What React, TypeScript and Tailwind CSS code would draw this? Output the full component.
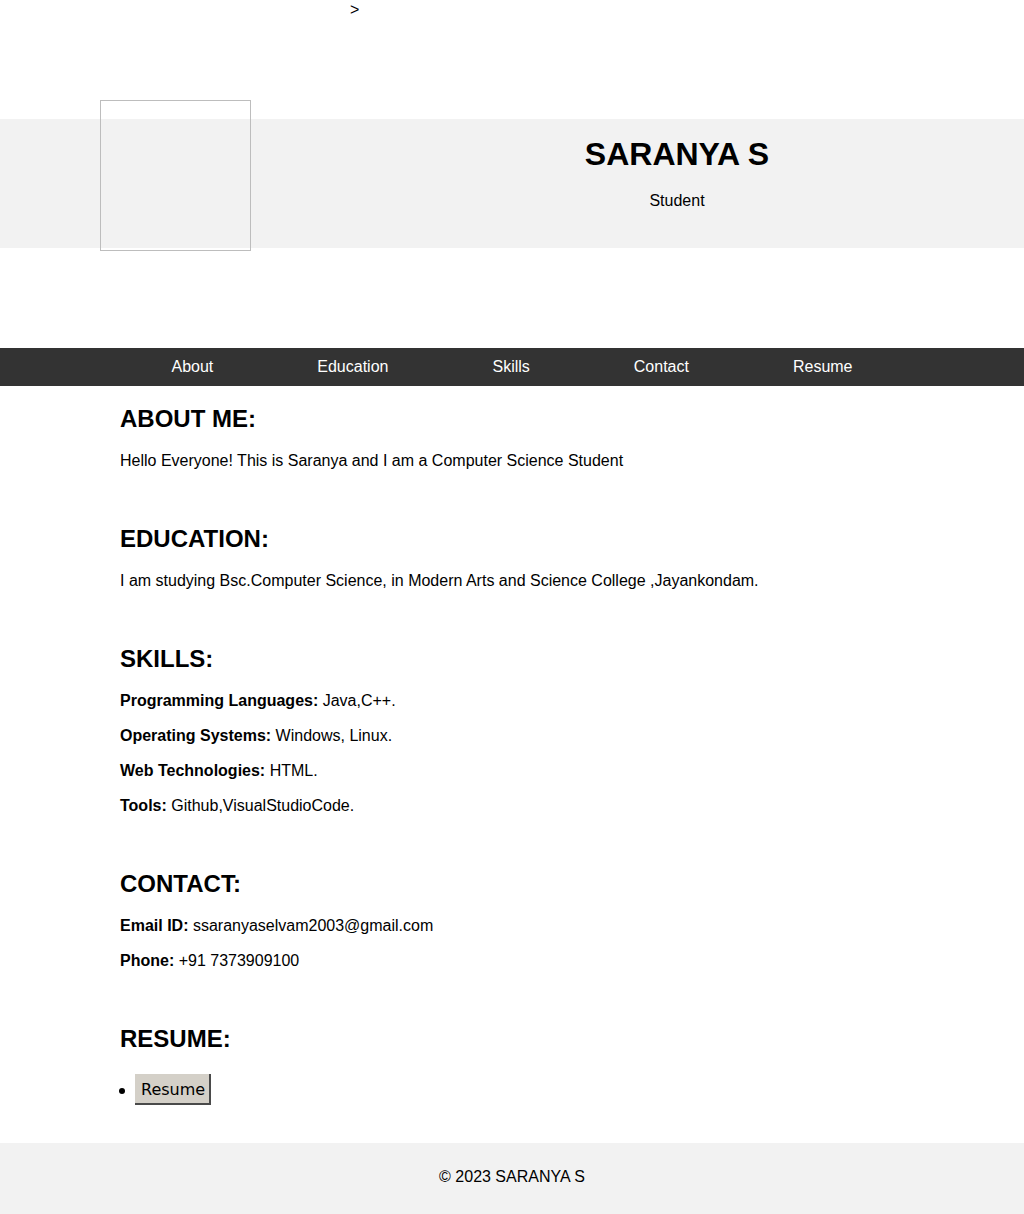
import React from "react";

const skills: [string, string][] = [
  ["Programming Languages:", "Java,C++."],
  ["Operating Systems:", "Windows, Linux."],
  ["Web Technologies:", "HTML."],
  ["Tools:", "Github,VisualStudioCode."],
];

export default function App() {
  return (
    <div className="min-h-[1214px] bg-white text-[16px] text-black font-['Liberation_Sans',Arial,sans-serif]">
      <div className="h-[119px] pl-[350px] pt-[1px] leading-[18px]">&gt;</div>

      <header className="relative h-[129px] bg-[#f2f2f2]">
        <div className="absolute left-[100px] top-[-19px] h-[151px] w-[151px] border border-[#bdbdbd]" />
        <div className="pl-[330px] pt-[17px] text-center">
          <h1 className="text-[32px] font-bold leading-[36px]">SARANYA S</h1>
          <p className="mt-[20px] leading-[18px]">Student</p>
        </div>
      </header>

      <div className="h-[100px]" />

      <nav className="flex h-[38px] items-center justify-center gap-[104px] bg-[#333333] text-white">
        <a href="#about">About</a>
        <a href="#education">Education</a>
        <a href="#skills">Skills</a>
        <a href="#contact">Contact</a>
        <a href="#resume">Resume</a>
      </nav>

      <main className="flex flex-col pl-[120px] leading-[18px]">
        <section id="about" className="mt-[19px]">
          <h2 className="text-[24px] font-bold leading-[28px]">ABOUT ME:</h2>
          <p className="mt-[19px]">Hello Everyone! This is Saranya and I am a Computer Science Student</p>
        </section>

        <section id="education" className="mt-[55px]">
          <h2 className="text-[24px] font-bold leading-[28px]">EDUCATION:</h2>
          <p className="mt-[19px]">
            I am studying Bsc.Computer Science, in Modern Arts and Science College ,Jayankondam.
          </p>
        </section>

        <section id="skills" className="mt-[55px]">
          <h2 className="text-[24px] font-bold leading-[28px]">SKILLS:</h2>
          <div className="mt-[19px] flex flex-col gap-[17px]">
            {skills.map(([k, v]) => (
              <p key={k}>
                <strong className="font-bold">{k}</strong> {v}
              </p>
            ))}
          </div>
        </section>

        <section id="contact" className="mt-[55px]">
          <h2 className="text-[24px] font-bold leading-[28px]">CONTACT:</h2>
          <div className="mt-[19px] flex flex-col gap-[17px]">
            <p>
              <strong className="font-bold">Email ID:</strong> ssaranyaselvam2003@gmail.com
            </p>
            <p>
              <strong className="font-bold">Phone:</strong> +91 7373909100
            </p>
          </div>
        </section>

        <section id="resume" className="mt-[55px]">
          <h2 className="text-[24px] font-bold leading-[28px]">RESUME:</h2>
          <ul className="mt-[21px] flex items-center">
            <li className="flex items-center">
              <span className="ml-[-1px] mr-[10px] mt-[2px] h-[6px] w-[6px] rounded-full bg-black" />
              <button className="h-[31px] border-r-2 border-b-2 border-r-[#4a4a4a] border-b-[#4a4a4a] bg-[#d4d0c8] pl-[6px] pr-[4px] pt-[2px] text-[16px] leading-[27px] text-black font-['DejaVu_Sans',sans-serif]">
                Resume
              </button>
            </li>
          </ul>
        </section>
      </main>

      <footer className="mt-[38px] h-[71px] bg-[#f2f2f2] pt-[25px] text-center leading-[18px]">
        © 2023 SARANYA S
      </footer>
    </div>
  );
}
